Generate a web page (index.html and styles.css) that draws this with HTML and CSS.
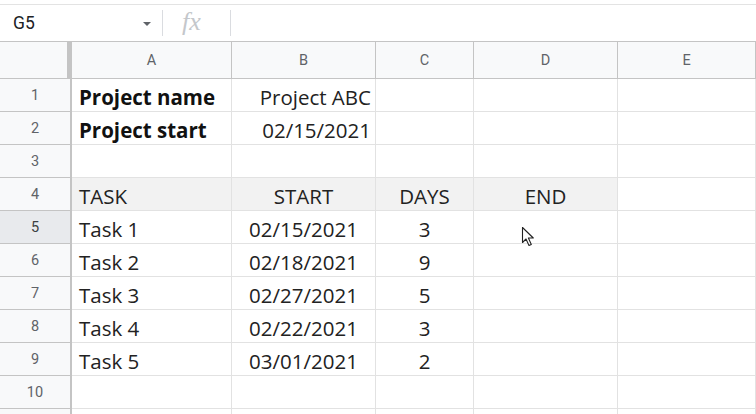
FILE: index.html
```html
<!DOCTYPE html>
<html>
<head>
<meta charset="utf-8">
<link rel="stylesheet" href="styles.css">
</head>
<body>
<div class="app">
  <div class="topgap"></div>
  <div class="formula-bar">
    <div class="namebox">
      <span class="ref">G5</span>
      <span class="caret"></span>
    </div>
    <div class="sep"></div>
    <div class="fx">fx</div>
    <div class="sep"></div>
    <div class="formula"></div>
  </div>
  <div class="sheet">
    <div class="corner"></div>
    <div class="colhead">A</div>
    <div class="colhead">B</div>
    <div class="colhead">C</div>
    <div class="colhead">D</div>
    <div class="colhead">E</div>

    <div class="rowhead">1</div>
    <div class="cell bold">Project name</div>
    <div class="cell right">Project ABC</div>
    <div class="cell"></div><div class="cell"></div><div class="cell"></div>

    <div class="rowhead">2</div>
    <div class="cell bold">Project start</div>
    <div class="cell right">02/15/2021</div>
    <div class="cell"></div><div class="cell"></div><div class="cell"></div>

    <div class="rowhead">3</div>
    <div class="cell"></div><div class="cell"></div><div class="cell"></div><div class="cell"></div><div class="cell"></div>

    <div class="rowhead">4</div>
    <div class="cell shade">TASK</div>
    <div class="cell shade center">START</div>
    <div class="cell shade center">DAYS</div>
    <div class="cell shade center">END</div>
    <div class="cell"></div>

    <div class="rowhead active">5</div>
    <div class="cell">Task 1</div>
    <div class="cell center">02/15/2021</div>
    <div class="cell center">3</div>
    <div class="cell"></div><div class="cell"></div>

    <div class="rowhead">6</div>
    <div class="cell">Task 2</div>
    <div class="cell center">02/18/2021</div>
    <div class="cell center">9</div>
    <div class="cell"></div><div class="cell"></div>

    <div class="rowhead">7</div>
    <div class="cell">Task 3</div>
    <div class="cell center">02/27/2021</div>
    <div class="cell center">5</div>
    <div class="cell"></div><div class="cell"></div>

    <div class="rowhead">8</div>
    <div class="cell">Task 4</div>
    <div class="cell center">02/22/2021</div>
    <div class="cell center">3</div>
    <div class="cell"></div><div class="cell"></div>

    <div class="rowhead">9</div>
    <div class="cell">Task 5</div>
    <div class="cell center">03/01/2021</div>
    <div class="cell center">2</div>
    <div class="cell"></div><div class="cell"></div>

    <div class="rowhead">10</div>
    <div class="cell"></div><div class="cell"></div><div class="cell"></div><div class="cell"></div><div class="cell"></div>

    <div class="rowhead"></div>
    <div class="cell"></div><div class="cell"></div><div class="cell"></div><div class="cell"></div><div class="cell"></div>
  </div>
  <svg class="pointer" width="14" height="22" viewBox="0 0 14 22">
    <path d="M1.5 1.5 L1.5 16.5 L5 13 L8 19.5 L10.3 18.5 L7.4 12 L12.3 12 Z" fill="#fff" stroke="#222" stroke-width="1.1" stroke-linejoin="round"/>
  </svg>
</div>
</body>
</html>
```

FILE: styles.css
```css
html, body {
  margin: 0;
  padding: 0;
  background: #fff;
  overflow: hidden;
}
.app {
  position: relative;
  width: 756px;
  height: 414px;
  overflow: hidden;
}
.topgap {
  height: 4px;
  border-bottom: 1px solid #e3e3e3;
}
.formula-bar {
  height: 36px;
  display: flex;
  align-items: center;
  border-bottom: 1px solid #c4c4c4;
  background: #fff;
}
.namebox {
  width: 162px;
  display: flex;
  align-items: center;
  justify-content: space-between;
  padding: 0 11px 0 13px;
  box-sizing: border-box;
}
.ref {
  font-family: Roboto, "Liberation Sans", sans-serif;
  font-size: 17.5px;
  color: #202124;
}
.caret {
  width: 0;
  height: 0;
  border-left: 4px solid transparent;
  border-right: 4px solid transparent;
  border-top: 4px solid #5f6368;
  margin-top: 2px;
}
.sep {
  width: 1px;
  height: 26px;
  background: #dadce0;
}
.fx {
  width: 67px;
  box-sizing: border-box;
  padding-left: 19px;
  font-family: "Liberation Serif", "DejaVu Serif", serif;
  font-style: italic;
  font-size: 26px;
  color: #c4c7cb;
  line-height: 1;
  margin-top: -2px;
}
.formula {
  flex: 1;
}
.sheet {
  display: grid;
  grid-template-columns: 72px 160px 144px 98px 144px 138px;
  grid-template-rows: 37px repeat(11, 33px);
}
.corner {
  background: #f8f9fa;
  border-right: 5px solid #c4c4c4;
  border-bottom: 1px solid #c4c4c4;
}
.colhead {
  background: #f8f9fa;
  border-right: 1px solid #c4c4c4;
  border-bottom: 1px solid #c4c4c4;
  display: flex;
  align-items: center;
  justify-content: center;
  font-family: Roboto, "Liberation Sans", sans-serif;
  font-size: 14.5px;
  color: #5f6368;
}
.rowhead {
  background: #f8f9fa;
  border-right: 2px solid #c4c4c4;
  border-bottom: 1px solid #c4c4c4;
  display: flex;
  align-items: center;
  justify-content: center;
  font-family: Roboto, "Liberation Sans", sans-serif;
  font-size: 14.5px;
  color: #5f6368;
}
.rowhead.active {
  background: #e8eaed;
  color: #3c4043;
}
.cell {
  border-right: 1px solid #e2e2e2;
  border-bottom: 1px solid #e2e2e2;
  display: flex;
  align-items: center;
  padding: 3px 4px 0 7px;
  box-sizing: border-box;
  font-family: "Open Sans", "Noto Sans", sans-serif;
  font-size: 20.5px;
  color: #222;
  white-space: nowrap;
  overflow: hidden;
}
.cell.bold {
  font-weight: 700;
  color: #111;
}
.cell.right {
  justify-content: flex-end;
}
.cell.center {
  justify-content: center;
  padding-left: 2px;
  padding-right: 2px;
}
.cell.shade {
  background: #f2f2f2;
}
.pointer {
  position: absolute;
  left: 521px;
  top: 226px;
}
```
